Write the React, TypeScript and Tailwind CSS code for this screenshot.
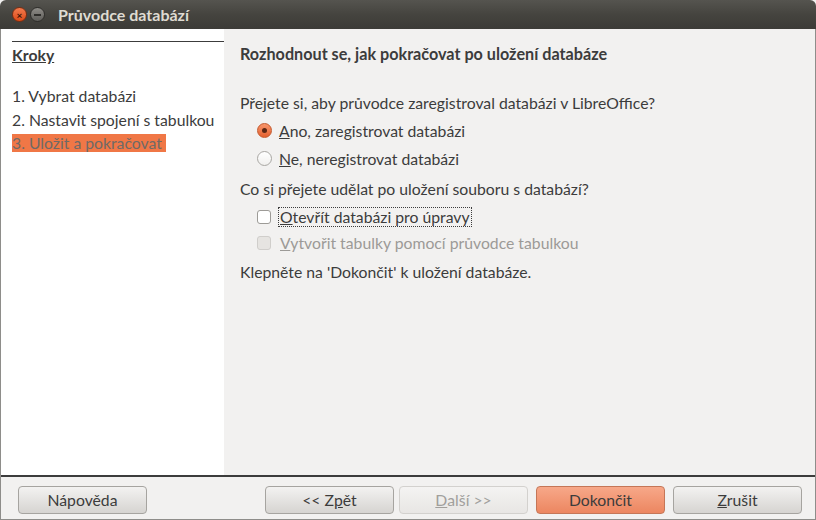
import React from 'react';

const font = { fontFamily: 'Lato, "Liberation Sans", sans-serif' };

function Radio({ checked }: { checked: boolean }) {
  return checked ? (
    <span className="w-[15px] h-[15px] rounded-full border border-[#c4582c] bg-gradient-to-b from-[#f7956b] to-[#e4602d] flex items-center justify-center">
      <span className="w-[5px] h-[5px] rounded-full bg-[#5a2613]" />
    </span>
  ) : (
    <span className="w-[15px] h-[15px] rounded-full border border-[#a9a7a3] bg-gradient-to-b from-white to-[#f1f0ee]" />
  );
}

function Check({ disabled }: { disabled?: boolean }) {
  return (
    <span
      className={
        disabled
          ? 'w-[14px] h-[14px] rounded-[3px] border border-[#d0cecb] bg-[#e6e4e1]'
          : 'w-[14px] h-[14px] rounded-[3px] border border-[#9d9b97] bg-white'
      }
    />
  );
}

function Button({
  children,
  variant = 'normal',
  className = '',
}: {
  children: React.ReactNode;
  variant?: 'normal' | 'primary' | 'disabled';
  className?: string;
}) {
  const styles = {
    normal: 'border-[#a6a4a0] bg-gradient-to-b from-[#f3f2f1] to-[#d6d4d1] text-[#3c3c3c]',
    primary: 'border-[#c57657] bg-gradient-to-b from-[#f7a889] to-[#ec8660] text-[#3c3c3c]',
    disabled: 'border-[#d3d1ce] bg-gradient-to-b from-[#f4f3f2] to-[#e8e6e4] text-[#a19f9c]',
  }[variant];
  return (
    <div
      className={`w-[129px] h-[28px] rounded-[4px] border flex items-center justify-center text-[15.75px] ${styles} ${className}`}
    >
      {children}
    </div>
  );
}

export default function App() {
  return (
    <div className="w-[816px] h-[520px] flex flex-col bg-[#f2f1f0] text-[#3c3c3c]" style={font}>
      <div className="h-[29px] shrink-0 rounded-t-[6px] bg-gradient-to-b from-[#55544f] via-[#45443f] to-[#3c3b37] flex items-center pl-[12px]">
        <span className="w-[15px] h-[15px] rounded-full bg-gradient-to-b from-[#f27a4c] to-[#dc4a15] border border-[#7d2d10] flex items-center justify-center text-[#3a1406] text-[10px] font-bold leading-none">
          ×
        </span>
        <span className="ml-[3px] w-[15px] h-[15px] rounded-full bg-gradient-to-b from-[#8e8c87] to-[#5f5e5a] border border-[#2e2d2a] flex items-center justify-center">
          <span className="w-[7px] h-[2px] bg-[#2e2d2a]" />
        </span>
        <span className="ml-[13px] text-[16px] font-bold text-[#dfdbd2]">Průvodce databází</span>
      </div>

      <div className="flex-1 flex flex-col border-x border-b border-[#8e8d8a]">
        <div className="flex-1 flex min-h-0">
          <div className="w-[223px] bg-white pl-[11px] pt-[12px] text-[15.75px]">
            <div className="border-t border-[#3c3c3c] pt-[1px]">
              <div className="font-bold underline">Kroky</div>
              <div className="mt-[17px] h-[24px] leading-[24px] whitespace-nowrap">1. Vybrat databázi</div>
              <div className="h-[24px] leading-[24px] whitespace-nowrap">2. Nastavit spojení s tabulkou</div>
              <div className="mt-[2px] h-[18px] leading-[18px] w-fit pr-[4px] whitespace-nowrap bg-[#f07746] text-[#6f6a66]">
                3. Uložit a pokračovat
              </div>
            </div>
          </div>

          <div className="flex-1 pl-[16px] pt-[15px] text-[15.75px]">
            <div className="font-bold text-[16.2px] leading-[20px]">Rozhodnout se, jak pokračovat po uložení databáze</div>
            <div className="mt-[29px] leading-[20px]">Přejete si, aby průvodce zaregistroval databázi v LibreOffice?</div>
            <div className="mt-[7px] ml-[17px] flex items-center gap-[7px] h-[21px]">
              <Radio checked />
              <span>
                <span className="underline">A</span>no, zaregistrovat databázi
              </span>
            </div>
            <div className="mt-[7px] ml-[17px] flex items-center gap-[7px] h-[21px]">
              <Radio checked={false} />
              <span>
                <span className="underline">N</span>e, neregistrovat databázi
              </span>
            </div>
            <div className="mt-[10px] leading-[20px]">Co si přejete udělat po uložení souboru s databází?</div>
            <div className="mt-[7px] ml-[17px] flex items-center gap-[7px] h-[21px]">
              <Check />
              <span className="border border-dotted border-[#3c3c3c] px-[1px] leading-[18px]">
                <span className="underline">O</span>tevřít databázi pro úpravy
              </span>
            </div>
            <div className="mt-[5px] ml-[17px] flex items-center gap-[7px] h-[21px] text-[#9c9a97]">
              <Check disabled />
              <span className="pl-[2px]">
                <span className="underline">V</span>ytvořit tabulky pomocí průvodce tabulkou
              </span>
            </div>
            <div className="mt-[9px] leading-[20px]">Klepněte na 'Dokončit' k uložení databáze.</div>
          </div>
        </div>

        <div className="h-[2px] bg-[#3c3c3c] shrink-0" />

        <div className="h-[42px] shrink-0 flex items-center pl-[17px] pr-[13px] pt-[3px]">
          <Button>Nápověda</Button>
          <div className="flex-1" />
          <Button>
            &lt;&lt; Z<span className="underline">p</span>ět
          </Button>
          <Button variant="disabled" className="ml-[5px]">
            <span className="underline">D</span>alší &gt;&gt;
          </Button>
          <Button variant="primary" className="ml-[8px]">
            Dokončit
          </Button>
          <Button className="ml-[8px]">
            <span className="underline">Z</span>rušit
          </Button>
        </div>
      </div>
    </div>
  );
}
